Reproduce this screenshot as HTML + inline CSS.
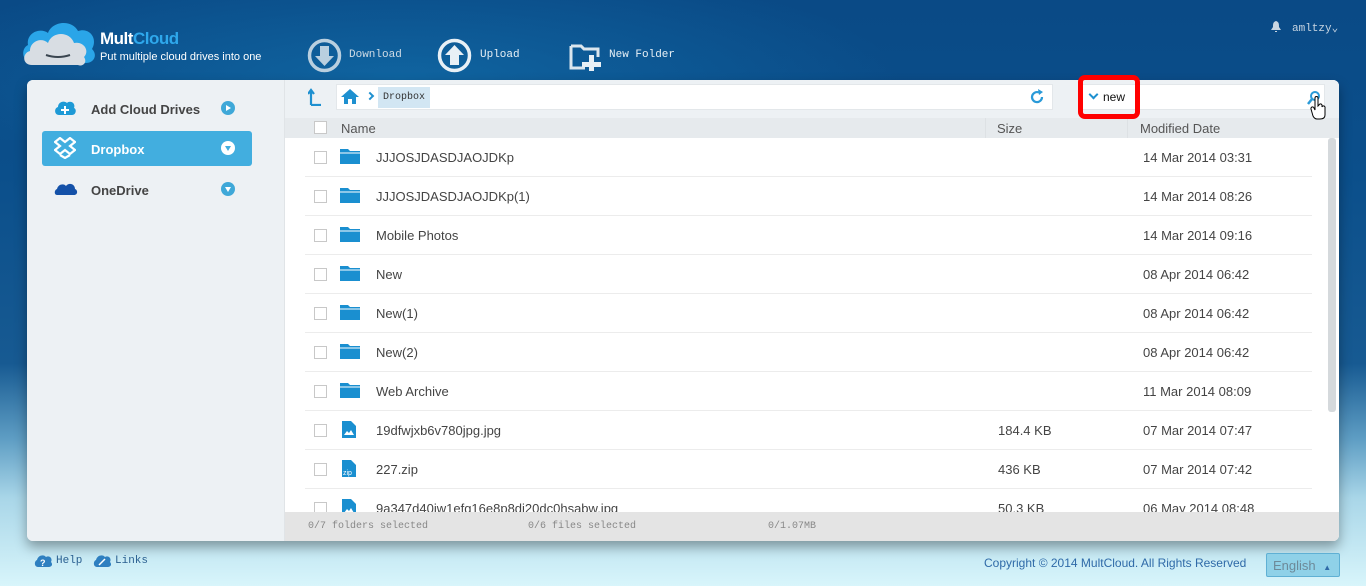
<!DOCTYPE html>
<html><head><meta charset="utf-8"><style>
*{margin:0;padding:0;box-sizing:border-box}
body{width:1366px;height:586px;overflow:hidden;position:relative;font-family:"Liberation Sans",sans-serif;
background:linear-gradient(180deg,#0a4a86 0%,#0b4f8b 30%,#175a92 62%,#5f9ec4 75%,#a9d6e8 85%,#d8f5fb 100%);}
.topglow{position:absolute;left:0;top:0;width:1366px;height:140px;background:radial-gradient(ellipse 500px 120px at 400px 80px,rgba(20,120,180,.55),rgba(0,0,0,0));}
.mono{font-family:"Liberation Mono","DejaVu Sans Mono",monospace}
.panel{position:absolute;left:27px;top:80px;width:1312px;height:461px;background:#edf1f4;border-radius:6px;overflow:hidden;box-shadow:0 6px 12px rgba(0,0,0,.35)}
.side{position:absolute;left:0;top:0;width:258px;height:461px;background:#edf1f4;border-right:1px solid #e0e4e7}
.item{position:absolute;left:15px;width:210px;height:35px;border-radius:3px;font-size:13px;font-weight:bold;color:#444;}
.item span{position:absolute;left:49px;top:11px}
.item .c{position:absolute;left:179px;top:10px;width:14px;height:14px;border-radius:50%;background:#3fa8d8}
.main{position:absolute;left:258px;top:0;width:1054px;height:461px;background:#fff}
.tb{position:absolute;left:0;top:0;width:1054px;height:38px;background:#edf1f4}
.crumb{position:absolute;left:51px;top:4px;width:717px;height:26px;background:#fff;border:1px solid #e3e7ea}
.search{position:absolute;left:795px;top:4px;width:245px;height:26px;background:#fff;border:1px solid #e3e7ea}
.hdr{position:absolute;left:0;top:38px;width:1054px;height:20px;background:#e6eaed;font-size:13px;color:#555}
.row{position:absolute;left:20px;width:1007px;height:39px;border-bottom:1px solid #ececec;font-size:13px;color:#444}
.cb{position:absolute;left:9px;top:13px;width:13px;height:13px;border:1px solid #c8c8c8;background:#fff}
.row .n{position:absolute;left:71px;top:12px}
.row .s{position:absolute;left:693px;top:12px}
.row .d{position:absolute;left:838px;top:12px}
.fold{position:absolute;left:35px;top:11px;width:20px;height:15px}
.status{position:absolute;left:0;top:432px;width:1054px;height:29px;background:#e4e4e4;font-size:10px;color:#888}
</style></head><body>
<div class="topglow"></div>
<svg style="position:absolute;left:20px;top:19px" width="78" height="48" viewBox="0 0 78 48">
<path d="M14 44 C2 44 0 30 8 26 C6 14 20 8 28 14 C32 2 52 0 58 12 C70 8 78 20 72 30 C78 36 74 44 66 44 Z" fill="#2aa5e8"/>
<path d="M12 46 C2 46 2 34 10 32 C10 22 22 18 28 24 C32 12 50 12 54 24 C64 22 70 32 64 38 C68 44 62 48 58 46 Z" fill="#d8dde3"/>
<path d="M26 36 Q38 40 50 36" stroke="#3a4550" stroke-width="2" fill="none"/>
</svg>
<div style="position:absolute;left:100px;top:29px;font-size:17px;font-weight:bold;color:#fff;letter-spacing:-0.5px">Mult<span style="color:#2ea8ec">Cloud</span></div>
<div style="position:absolute;left:100px;top:51px;font-size:11px;color:#fff">Put multiple cloud drives into one</div>
<svg style="position:absolute;left:307px;top:38px" width="35" height="35"><circle cx="17.5" cy="17.5" r="15" fill="none" stroke="#b9cfdf" stroke-width="3.5"/><path d="M13 8h9v10h5l-9.5 10L8 18h5z" fill="#b9cfdf"/></svg>
<div class="mono" style="position:absolute;left:349px;top:49px;font-size:11px;color:#cfdbe5">Download</div>
<svg style="position:absolute;left:437px;top:38px" width="35" height="35"><circle cx="17.5" cy="17.5" r="15" fill="none" stroke="#e8f0f6" stroke-width="3.5"/><path d="M13 27h9V17h5L17.5 7 8 17h5z" fill="#e8f0f6"/></svg>
<div class="mono" style="position:absolute;left:480px;top:49px;font-size:11px;color:#e8f0f6">Upload</div>
<svg style="position:absolute;left:568px;top:38px" width="36" height="33"><path d="M3 8h10l3 3h14v8M3 8v22h14" fill="none" stroke="#dbe6ee" stroke-width="3"/><path d="M21 17h5v7h7v5h-7v7h-5v-7h-7v-5h7z" fill="#e8f0f6"/></svg>
<div class="mono" style="position:absolute;left:609px;top:49px;font-size:11px;color:#e8f0f6">New Folder</div>
<svg style="position:absolute;left:1271px;top:21px" width="10" height="11"><path d="M5 0C2 1 2 3 2 6L0 9h10L8 6C8 3 8 1 5 0z M4 10h2v1H4z" fill="#c9d6e2"/></svg>
<div class="mono" style="position:absolute;left:1292px;top:21px;font-size:11px;color:#c9d6e2">amltzy&#8964;</div>

<div class="panel">
 <div class="side">
  <div class="item" style="top:11px"><svg style="position:absolute;left:12px;top:9px" width="22" height="16"><path d="M5 15C0 15 0 8 4 7 4 2 10 0 13 3 16 0 22 3 20 8 23 9 22 15 18 15z" fill="#1e9ad6"/><path d="M10 6h2v3h3v2h-3v3h-2v-3H7V9h3z" fill="#fff"/></svg><span>Add Cloud Drives</span><div class="c"><div style="position:absolute;left:5px;top:3.5px;border-left:5px solid #fff;border-top:3.5px solid transparent;border-bottom:3.5px solid transparent"></div></div></div>
  <div class="item" style="top:51px;background:#42aedf;color:#fff"><svg style="position:absolute;left:12px;top:6px" width="22" height="22"><path d="M6 1 1 5l5 4-5 4 5 4 5-4 5 4 5-4-5-4 5-4-5-4-5 4z M6 18l5 3 5-3" fill="none" stroke="#fff" stroke-width="2.2"/></svg><span>Dropbox</span><div class="c" style="background:#fff"><div style="position:absolute;left:3.5px;top:5px;border-top:5px solid #42aedf;border-left:3.5px solid transparent;border-right:3.5px solid transparent"></div></div></div>
  <div class="item" style="top:92px"><svg style="position:absolute;left:12px;top:10px" width="24" height="14"><path d="M3 13C0 13 0 8 3 7 4 2 10 1 12 4 15 0 21 2 21 7 24 8 24 13 20 13z" fill="#1451a8"/></svg><span>OneDrive</span><div class="c"><div style="position:absolute;left:3.5px;top:5px;border-top:5px solid #fff;border-left:3.5px solid transparent;border-right:3.5px solid transparent"></div></div></div>
 </div>
 <div class="main">
  <div class="tb">
   <svg style="position:absolute;left:23px;top:8px" width="14" height="18"><path d="M3 17h10M3 17V3M0 6l3-4 3 4" stroke="#1e90d0" stroke-width="2.2" fill="none"/></svg>
   <div class="crumb">
    <svg style="position:absolute;left:4px;top:3px" width="18" height="17"><path d="M9 1 0 9h3v7h4v-5h4v5h4V9h3z" fill="#1e90d0"/></svg>
    <div style="position:absolute;left:30px;top:8px;width:6px;height:6px;border-right:2px solid #1e90d0;border-top:2px solid #1e90d0;transform:rotate(45deg)"></div>
    <div class="mono" style="position:absolute;left:41px;top:2px;height:21px;padding:5px 5px 0;background:#d2e6f3;font-size:10px;color:#333">Dropbox</div>
    <svg style="position:absolute;left:692px;top:4px" width="16" height="16"><path d="M13 8A5 5 0 1 1 10 3.5" stroke="#2a9ad8" stroke-width="2.2" fill="none"/><path d="M9 0l5 3-4 3z" fill="#2a9ad8"/></svg>
   </div>
   <div class="search">
    <div style="position:absolute;left:9px;top:6px;width:7px;height:7px;border-right:2px solid #1e90d0;border-bottom:2px solid #1e90d0;transform:rotate(45deg)"></div>
    <div style="position:absolute;left:22px;top:5px;font-size:12px;color:#111">new</div>
    <svg style="position:absolute;left:226px;top:5px" width="14" height="16"><circle cx="8" cy="6" r="4" stroke="#2a9ad8" stroke-width="2" fill="none"/><path d="M5 9 1 14" stroke="#2a9ad8" stroke-width="2.5"/></svg>
   </div>
  </div>
  <div class="hdr">
   <div class="cb" style="left:29px;top:3px"></div>
   <div style="position:absolute;left:56px;top:3px">Name</div>
   <div style="position:absolute;left:700px;top:0;height:20px;border-left:1px solid #dde1e4"></div>
   <div style="position:absolute;left:712px;top:3px">Size</div>
   <div style="position:absolute;left:842px;top:0;height:20px;border-left:1px solid #dde1e4"></div>
   <div style="position:absolute;left:855px;top:3px">Modified Date</div>
  </div>
  <div style="position:absolute;left:1043px;top:58px;width:8px;height:274px;background:#d5d9dc;border-radius:3px"></div>
  <div class="row" style="top:58px"><div class="cb"></div><svg class="fold"><path d="M0 0h8l2 2h10v13H0z" fill="#1a8fd0"/><path d="M0 4h20" stroke="#fff" stroke-width="1"/></svg><div class="n">JJJOSJDASDJAOJDKp</div><div class="d">14 Mar 2014 03:31</div></div>
  <div class="row" style="top:97px"><div class="cb"></div><svg class="fold"><path d="M0 0h8l2 2h10v13H0z" fill="#1a8fd0"/><path d="M0 4h20" stroke="#fff" stroke-width="1"/></svg><div class="n">JJJOSJDASDJAOJDKp(1)</div><div class="d">14 Mar 2014 08:26</div></div>
  <div class="row" style="top:136px"><div class="cb"></div><svg class="fold"><path d="M0 0h8l2 2h10v13H0z" fill="#1a8fd0"/><path d="M0 4h20" stroke="#fff" stroke-width="1"/></svg><div class="n">Mobile Photos</div><div class="d">14 Mar 2014 09:16</div></div>
  <div class="row" style="top:175px"><div class="cb"></div><svg class="fold"><path d="M0 0h8l2 2h10v13H0z" fill="#1a8fd0"/><path d="M0 4h20" stroke="#fff" stroke-width="1"/></svg><div class="n">New</div><div class="d">08 Apr 2014 06:42</div></div>
  <div class="row" style="top:214px"><div class="cb"></div><svg class="fold"><path d="M0 0h8l2 2h10v13H0z" fill="#1a8fd0"/><path d="M0 4h20" stroke="#fff" stroke-width="1"/></svg><div class="n">New(1)</div><div class="d">08 Apr 2014 06:42</div></div>
  <div class="row" style="top:253px"><div class="cb"></div><svg class="fold"><path d="M0 0h8l2 2h10v13H0z" fill="#1a8fd0"/><path d="M0 4h20" stroke="#fff" stroke-width="1"/></svg><div class="n">New(2)</div><div class="d">08 Apr 2014 06:42</div></div>
  <div class="row" style="top:292px"><div class="cb"></div><svg class="fold"><path d="M0 0h8l2 2h10v13H0z" fill="#1a8fd0"/><path d="M0 4h20" stroke="#fff" stroke-width="1"/></svg><div class="n">Web Archive</div><div class="d">11 Mar 2014 08:09</div></div>
  <div class="row" style="top:331px"><div class="cb"></div><svg style="position:absolute;left:37px;top:10px" width="14" height="17"><path d="M0 0h9l5 5v12H0z" fill="#1a8fd0"/><path d="M2 14l3-4 2 2 2-3 3 5z" fill="#fff"/></svg><div class="n">19dfwjxb6v780jpg.jpg</div><div class="s">184.4 KB</div><div class="d">07 Mar 2014 07:47</div></div>
  <div class="row" style="top:370px"><div class="cb"></div><svg style="position:absolute;left:37px;top:10px" width="14" height="17"><path d="M0 0h9l5 5v12H0z" fill="#1a8fd0"/><text x="1" y="15" font-size="7" fill="#fff" font-family="Liberation Sans">zip</text></svg><div class="n">227.zip</div><div class="s">436 KB</div><div class="d">07 Mar 2014 07:42</div></div>
  <div class="row" style="top:409px"><div class="cb"></div><svg style="position:absolute;left:37px;top:10px" width="14" height="17"><path d="M0 0h9l5 5v12H0z" fill="#1a8fd0"/><path d="M2 14l3-4 2 2 2-3 3 5z" fill="#fff"/></svg><div class="n">9a347d40jw1efg16e8p8dj20dc0hsabw.jpg</div><div class="s">50.3 KB</div><div class="d">06 May 2014 08:48</div></div>
  <div class="status mono"><span style="position:absolute;left:23px;top:9px">0/7 folders selected</span><span style="position:absolute;left:243px;top:9px">0/6 files selected</span><span style="position:absolute;left:483px;top:9px">0/1.07MB</span></div>
 </div>
</div>
<div style="position:absolute;left:1078px;top:75px;width:62px;height:44px;border:5px solid #f00;border-radius:7px"></div>
<svg style="position:absolute;left:1310px;top:96px" width="18" height="24"><path d="M5 2a1.5 1.5 0 0 1 3 0v8l1-1a1.5 1.5 0 0 1 3 1v1a1.5 1.5 0 0 1 3 1v7c0 3-2 4-5 4H7c-2 0-3-1-4-3L1 13a1.5 1.5 0 0 1 3-1l1 2z" fill="#fff" stroke="#000" stroke-width="1"/></svg>
<svg style="position:absolute;left:34px;top:554px" width="18" height="13"><path d="M4 13C0 13 0 7 3 6 4 1 10 0 12 3 15 1 19 4 17 8 19 10 18 13 15 13z" fill="#2e7fc0"/><text x="6" y="12" font-size="9" font-weight="bold" fill="#fff" font-family="Liberation Sans">?</text></svg>
<div class="mono" style="position:absolute;left:56px;top:555px;font-size:11px;color:#2a5f90">Help</div>
<svg style="position:absolute;left:93px;top:554px" width="18" height="13"><path d="M4 13C0 13 0 7 3 6 4 1 10 0 12 3 15 1 19 4 17 8 19 10 18 13 15 13z" fill="#2e7fc0"/><path d="M6 11l6-6" stroke="#fff" stroke-width="1.5"/></svg>
<div class="mono" style="position:absolute;left:115px;top:555px;font-size:11px;color:#2a5f90">Links</div>
<div style="position:absolute;left:984px;top:556px;font-size:12px;color:#2f6aa8">Copyright © 2014 MultCloud. All Rights Reserved</div>
<div style="position:absolute;left:1266px;top:553px;width:74px;height:24px;background:#8fd1e8;border:1px solid #5fb0d4;border-radius:2px;font-size:13px;color:#6d8a99;padding:4px 0 0 6px">English <span style="font-size:8px;color:#2f6aa8;margin-left:4px">&#9650;</span></div>
</body></html>
